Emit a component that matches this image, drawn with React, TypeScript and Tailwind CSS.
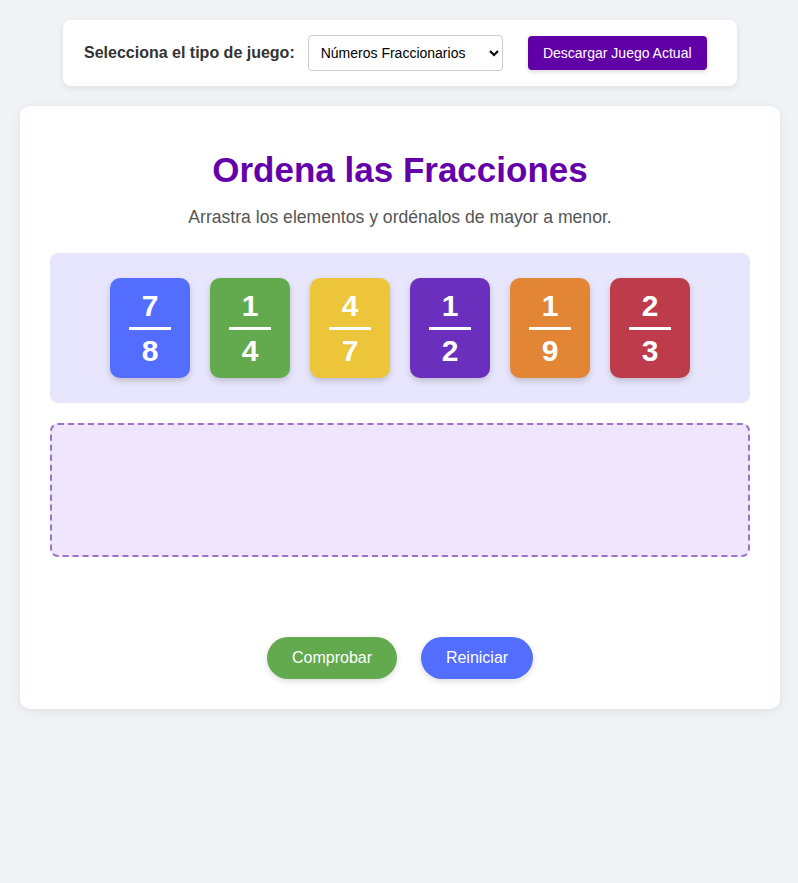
import React from 'react';

const fractions = [
  { n: 7, d: 8, bg: 'bg-[#536dfe]' },
  { n: 1, d: 4, bg: 'bg-[#63a94e]' },
  { n: 4, d: 7, bg: 'bg-[#ecc53b]' },
  { n: 1, d: 2, bg: 'bg-[#6a2fbc]' },
  { n: 1, d: 9, bg: 'bg-[#e28534]' },
  { n: 2, d: 3, bg: 'bg-[#be3b4b]' },
];

export default function App() {
  return (
    <div className="min-h-screen bg-[#f0f2f5] py-5 pl-5 pr-[18px] font-['Liberation_Sans',Arial,sans-serif]">
      {/* barra de selección */}
      <div className="mx-auto flex h-[66px] w-[674px] items-center rounded-lg bg-white pl-[21px] shadow-[0_2px_6px_rgba(0,0,0,0.08)]">
        <label className="text-[16px] font-bold text-[#333]">Selecciona el tipo de juego:</label>
        <select
          defaultValue="fracciones"
          className="ml-[13px] h-9 w-[195px] rounded border border-[#ccc] bg-white px-2 text-[14px] text-black"
        >
          <option value="fracciones">Números Fraccionarios</option>
        </select>
        <button className="ml-[25px] h-[34px] w-[179px] rounded bg-[#6200a8] text-[14px] text-white shadow-[0_2px_4px_rgba(0,0,0,0.15)]">
          Descargar Juego Actual
        </button>
      </div>

      {/* tarjeta principal */}
      <div className="mt-5 rounded-[10px] bg-white px-[30px] pt-[43px] pb-[30px] shadow-[0_2px_10px_rgba(0,0,0,0.08)]">
        <h1 className="text-center text-[35px] leading-[42px] font-bold text-[#6400aa]">Ordena las Fracciones</h1>
        <p className="mt-[15px] text-center text-[17.6px] leading-[22px] text-[#555]">
          Arrastra los elementos y ordénalos de mayor a menor.
        </p>

        <div className="mt-[25px] flex h-[150px] items-center justify-center gap-5 rounded-lg bg-[#e8e6fc]">
          {fractions.map((f, i) => (
            <div
              key={i}
              className={`flex h-[100px] w-[80px] flex-col items-center justify-center rounded-[10px] ${f.bg} text-white shadow-[0_3px_6px_rgba(0,0,0,0.18)]`}
            >
              <span className="text-[30px] leading-[34px] font-bold">{f.n}</span>
              <span className="my-[4px] h-[3px] w-[42px] bg-white"></span>
              <span className="text-[30px] leading-[34px] font-bold">{f.d}</span>
            </div>
          ))}
        </div>

        <div className="mt-5 h-[134px] rounded-lg border-2 border-dashed border-[#9b72c8] bg-[#efe6fd]"></div>

        <div className="mt-[80px] flex justify-center gap-6">
          <button className="h-[42px] w-[130px] rounded-full bg-[#63a94e] text-[16px] text-white shadow-[0_2px_6px_rgba(0,0,0,0.15)]">
            Comprobar
          </button>
          <button className="h-[42px] w-[112px] rounded-full bg-[#536dfe] text-[16px] text-white shadow-[0_2px_6px_rgba(0,0,0,0.15)]">
            Reiniciar
          </button>
        </div>
      </div>
    </div>
  );
}
